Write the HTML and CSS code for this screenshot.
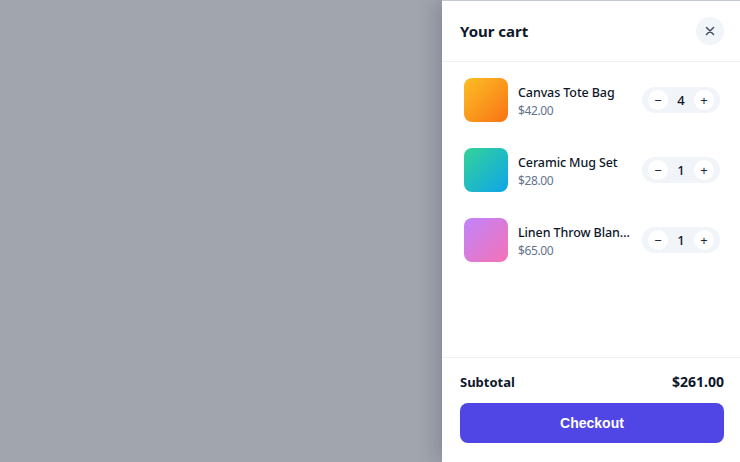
FILE: index.html
```html
<!DOCTYPE html>
<html>
<head>
    <title>Your cart</title>
    <link rel="stylesheet" href="styles.css">
</head>
<body>
    <div class="backdrop"></div>
    <aside class="drawer">
        <header class="drawer-header">
            <h2>Your cart</h2>
            <button class="close-btn" aria-label="Close">
                <svg width="10" height="10" viewBox="0 0 10 10"><path d="M1.5 1.5l7 7M8.5 1.5l-7 7" stroke="#475569" stroke-width="1.6" stroke-linecap="round"/></svg>
            </button>
        </header>
        <ul class="cart-list">
            <li class="cart-item">
                <div class="thumb thumb-orange"></div>
                <div class="item-info">
                    <div class="item-name">Canvas Tote Bag</div>
                    <div class="item-price">$42.00</div>
                </div>
                <div class="qty">
                    <button class="qty-btn">&minus;</button>
                    <span class="qty-num">4</span>
                    <button class="qty-btn">+</button>
                </div>
            </li>
            <li class="cart-item">
                <div class="thumb thumb-teal"></div>
                <div class="item-info">
                    <div class="item-name">Ceramic Mug Set</div>
                    <div class="item-price">$28.00</div>
                </div>
                <div class="qty">
                    <button class="qty-btn">&minus;</button>
                    <span class="qty-num">1</span>
                    <button class="qty-btn">+</button>
                </div>
            </li>
            <li class="cart-item">
                <div class="thumb thumb-pink"></div>
                <div class="item-info">
                    <div class="item-name">Linen Throw Blanket</div>
                    <div class="item-price">$65.00</div>
                </div>
                <div class="qty">
                    <button class="qty-btn">&minus;</button>
                    <span class="qty-num">1</span>
                    <button class="qty-btn">+</button>
                </div>
            </li>
        </ul>
        <footer class="drawer-footer">
            <div class="subtotal">
                <span>Subtotal</span>
                <span class="subtotal-amount">$261.00</span>
            </div>
            <button class="checkout-btn">Checkout</button>
        </footer>
    </aside>
</body>
</html>
```

FILE: styles.css
```css
html, body {
    height: 100%;
}
body {
    margin: 0;
    display: flex;
    font-family: "Noto Sans", "Open Sans", sans-serif;
    color: #0f172a;
    background: #a1a5ae;
    overflow: hidden;
}
.backdrop {
    flex: 1;
}
.drawer {
    width: 298px;
    display: flex;
    flex-direction: column;
    background: #fff;
    border-top: 1px solid #c4c8d0;
    box-shadow: -6px 0 18px rgba(15, 23, 42, 0.18);
}
.drawer-header {
    display: flex;
    align-items: center;
    justify-content: space-between;
    padding: 16px 16px 16px 18px;
    border-bottom: 1px solid #eef0f3;
}
.drawer-header h2 {
    margin: 0;
    font-size: 15px;
    font-weight: 700;
    line-height: 28px;
}
.close-btn {
    width: 28px;
    height: 28px;
    border: none;
    border-radius: 50%;
    background: #f1f5f9;
    display: flex;
    align-items: center;
    justify-content: center;
    padding: 0;
    cursor: pointer;
}
.cart-list {
    flex: 1;
    list-style: none;
    margin: 0;
    padding: 16px 20px 16px 22px;
    display: flex;
    flex-direction: column;
    gap: 26px;
}
.cart-item {
    display: flex;
    align-items: center;
    gap: 10px;
}
.thumb {
    width: 44px;
    height: 44px;
    border-radius: 8px;
    flex-shrink: 0;
}
.thumb-orange {
    background: linear-gradient(135deg, #fbbf24, #f97316);
}
.thumb-teal {
    background: linear-gradient(135deg, #34d399, #0ea5e9);
}
.thumb-pink {
    background: linear-gradient(135deg, #c084fc, #f472b6);
}
.item-info {
    flex: 1;
    min-width: 0;
    margin-right: 2px;
    padding-top: 3px;
}
.item-name {
    font-size: 12.5px;
    font-weight: 500;
    letter-spacing: -0.1px;
    line-height: 18px;
    white-space: nowrap;
    overflow: hidden;
    text-overflow: ellipsis;
}
.item-price {
    font-size: 12px;
    letter-spacing: -0.4px;
    line-height: 17px;
    color: #64748b;
}
.qty {
    display: flex;
    align-items: center;
    background: #f1f5f9;
    border-radius: 13px;
    padding: 3px 6px;
    flex-shrink: 0;
}
.qty-btn {
    width: 20px;
    height: 20px;
    border: none;
    border-radius: 50%;
    background: #fff;
    padding: 0;
    font-family: "Noto Sans", sans-serif;
    font-size: 13px;
    line-height: 20px;
    color: #1e293b;
    cursor: pointer;
}
.qty-num {
    width: 26px;
    text-align: center;
    font-size: 13px;
    font-weight: 500;
}
.drawer-footer {
    border-top: 1px solid #eef0f3;
    padding: 15px 16px 19px 18px;
}
.subtotal {
    display: flex;
    justify-content: space-between;
    align-items: center;
    font-size: 13px;
    font-weight: 700;
    line-height: 18px;
    margin-bottom: 12px;
}
.subtotal-amount {
    font-size: 14px;
}
.checkout-btn {
    width: 100%;
    height: 40px;
    border: none;
    border-radius: 8px;
    background: #4f46e5;
    color: #fff;
    font-family: "Liberation Sans", Arial, sans-serif;
    font-size: 14px;
    font-weight: 700;
    cursor: pointer;
}
```
